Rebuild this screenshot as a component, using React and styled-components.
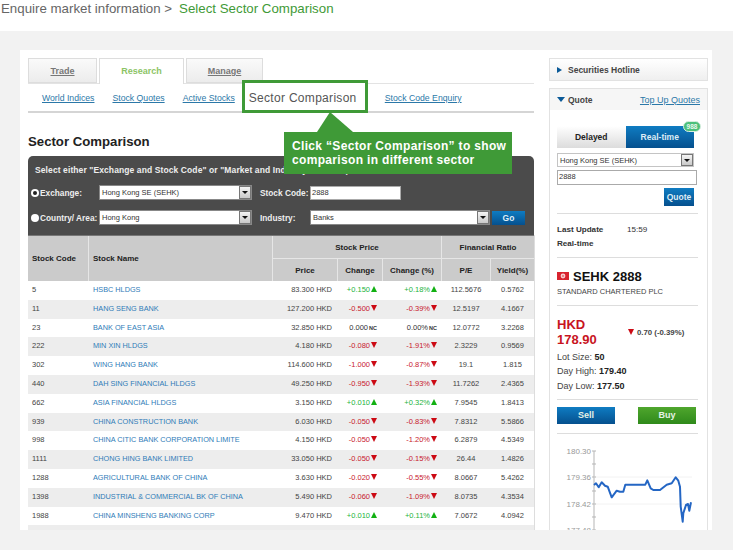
import React from "react";
import styled, { createGlobalStyle } from "styled-components";

const GlobalStyle = createGlobalStyle`
  html, body { margin: 0; padding: 0; background: #fff; }
  body { font-family: "Liberation Sans", Arial, sans-serif; }
  * { box-sizing: border-box; }
`;

const GREEN = "#3f9a37";
const LINK = "#2b78a8";
const BLUE_GRAD = "linear-gradient(#0f7cc2, #05508e)";
const TABLE_COLS = "60px 183px 64px 44px 58px 48px 1fr";

const rows = [
  ["5", "HSBC HLDGS", "83.300", "+0.150", "+0.18%", "112.5676", "0.5762"],
  ["11", "HANG SENG BANK", "127.200", "-0.500", "-0.39%", "12.5197", "4.1667"],
  ["23", "BANK OF EAST ASIA", "32.850", "0.000", "0.00%", "12.0772", "3.2268"],
  ["222", "MIN XIN HLDGS", "4.180", "-0.080", "-1.91%", "2.3229", "0.9569"],
  ["302", "WING HANG BANK", "114.600", "-1.000", "-0.87%", "19.1", "1.815"],
  ["440", "DAH SING FINANCIAL HLDGS", "49.250", "-0.950", "-1.93%", "11.7262", "2.4365"],
  ["662", "ASIA FINANCIAL HLDGS", "3.150", "+0.010", "+0.32%", "7.9545", "1.8413"],
  ["939", "CHINA CONSTRUCTION BANK", "6.030", "-0.050", "-0.83%", "7.8312", "5.5866"],
  ["998", "CHINA CITIC BANK CORPORATION LIMITE", "4.150", "-0.050", "-1.20%", "6.2879", "4.5349"],
  ["1111", "CHONG HING BANK LIMITED", "33.050", "-0.050", "-0.15%", "26.44", "1.4826"],
  ["1288", "AGRICULTURAL BANK OF CHINA", "3.630", "-0.020", "-0.55%", "8.0667", "5.4262"],
  ["1398", "INDUSTRIAL & COMMERCIAL BK OF CHINA", "5.490", "-0.060", "-1.09%", "8.0735", "4.3534"],
  ["1988", "CHINA MINSHENG BANKING CORP", "9.470", "+0.010", "+0.11%", "7.0672", "4.0942"],
];

const chartLine = [
  [162, 285], [168, 280], [176, 292], [185, 277], [195, 287], [203, 290], [215, 322], [230, 302],
  [240, 305], [250, 305], [256, 284], [316, 284], [322, 271], [332, 295], [340, 300], [360, 300],
  [380, 284], [395, 280], [407, 262], [415, 272], [420, 290], [422, 350], [428, 395], [430, 370],
  [438, 345], [444, 342], [448, 362], [453, 337],
];

const Page = styled.div`
  width: 733px;
  height: 550px;
  overflow: hidden;
  background: #f2f2f2;
`;

const Title = styled.div`
  height: 31px;
  background: #fff;
  padding: 0 0 0 1px;
  font-size: 13.3px;
  line-height: 17px;
  color: #666;
  display: flex;
  gap: 7px;
`;

const TitleGreen = styled.span`
  color: ${GREEN};
`;

const Sheet = styled.div`
  margin: 19px 21px 0 20px;
  height: 480px;
  background: #fff;
  padding: 8px 4px 0 8px;
  display: flex;
  gap: 15px;
  overflow: hidden;
`;

const Main = styled.div`
  position: relative;
  width: 506px;
  flex: none;
`;

const Tabs = styled.div`
  display: flex;
  gap: 2px;
  height: 25px;
`;

const Tab = styled.div`
  width: ${(p) => p.$w}px;
  height: ${(p) => (p.$active ? 26 : 25)}px;
  border: 1px solid #ddd;
  border-bottom: ${(p) => (p.$active ? "none" : "1px solid #ddd")};
  background: ${(p) => (p.$active ? "#fff" : "linear-gradient(#fafafa, #ececec)")};
  color: ${(p) => (p.$active ? "#8cc465" : "#777")};
  text-decoration: ${(p) => (p.$active ? "none" : "underline")};
  font-size: 9px;
  font-weight: bold;
  text-align: center;
  line-height: 25px;
  position: relative;
`;

const SubNav = styled.nav`
  height: 30px;
  border-top: 1px solid #e3e3e3;
  border-bottom: 2px solid #d5d5d5;
  display: flex;
  align-items: center;
  padding: 1px 0 0 14px;
  gap: 18px;
`;

const NavLink = styled.a`
  font-size: 8.7px;
  color: ${LINK};
  text-decoration: underline;
  white-space: nowrap;
`;

const SectorBox = styled.div`
  align-self: flex-start;
  flex: none;
  width: 126px;
  height: 33px;
  margin: -5px -1px 0 -11px;
  border: 3px solid ${GREEN};
  background: #fff;
  color: #555;
  font-size: 12px;
  letter-spacing: 0.3px;
  line-height: 27px;
  padding: 2px 0 0 4px;
  white-space: nowrap;
  position: relative;
`;

const Callout = styled.div`
  position: absolute;
  left: 256px;
  top: 74px;
  width: 228px;
  height: 42px;
  background: ${GREEN};
  color: #fff;
  font-size: 12px;
  letter-spacing: 0.33px;
  font-weight: bold;
  line-height: 14px;
  padding: 7px 0 0 8px;
  z-index: 3;
  white-space: nowrap;

  &::before {
    content: "";
    position: absolute;
    left: 33px;
    top: -20px;
    width: 36px;
    height: 20px;
    background: ${GREEN};
    clip-path: polygon(13px 0, 0 100%, 100% 100%);
  }
`;

const Heading = styled.h2`
  margin: 19px 0 0;
  height: 24px;
  font-size: 13.2px;
  line-height: 19px;
  color: #222;
`;

const Filter = styled.div`
  height: 79px;
  background: #4b4b4b;
  border-radius: 5px 5px 0 0;
  padding: 8px 0 0 3px;
  color: #eee;
  font-size: 8.5px;
  font-weight: bold;
`;

const FilterHint = styled.div`
  line-height: 12px;
  padding-left: 4px;
  letter-spacing: 0.1px;
  white-space: nowrap;
`;

const FilterRow = styled.div`
  display: flex;
  align-items: center;
  height: 15px;
  margin-top: ${(p) => p.$top}px;
`;

const Radio = styled.span`
  width: 8px;
  height: 8px;
  border-radius: 50%;
  background: #fff;
  flex: none;
  margin-right: 1px;
  position: relative;

  &::after {
    content: "";
    display: ${(p) => (p.$on ? "block" : "none")};
    position: absolute;
    left: 2px;
    top: 2px;
    width: 4px;
    height: 4px;
    border-radius: 50%;
    background: #222;
  }
`;

const FilterLabel = styled.span`
  width: ${(p) => p.$w}px;
  padding-left: ${(p) => p.$pad || 0}px;
  flex: none;
  font-size: 8.3px;
  white-space: nowrap;
`;

const SelectBox = styled.div`
  width: ${(p) => p.$w}px;
  height: ${(p) => p.$h || 15}px;
  flex: none;
  background: #fff;
  border: 1px solid ${(p) => (p.$light ? "#c4c4c4" : "#888")};
  color: #333;
  font-size: 7.5px;
  font-weight: normal;
  line-height: 13px;
  padding-left: 2px;
  display: flex;
  justify-content: space-between;
  white-space: nowrap;
`;

const SelectArrow = styled.span`
  width: 12px;
  flex: none;
  background: linear-gradient(#f4f4f4, #c9c9c9);
  border: 1px solid #777;
  display: flex;
  align-items: center;
  justify-content: center;

  &::after {
    content: "";
    border-left: 3px solid transparent;
    border-right: 3px solid transparent;
    border-top: 3px solid #111;
  }
`;

const TextBox = styled.div`
  width: ${(p) => p.$w}px;
  height: ${(p) => p.$h}px;
  flex: none;
  background: #fff;
  border: 1px solid #aaa;
  color: #333;
  font-size: 7.5px;
  font-weight: normal;
  line-height: 12px;
  padding-left: 1px;
`;

const GoButton = styled.span`
  width: 33px;
  height: 14px;
  margin-left: 2px;
  background: ${BLUE_GRAD};
  color: #dfeef8;
  font-size: 8.5px;
  text-align: center;
  line-height: 14px;
`;

const TableWrap = styled.div`
  border-left: 1px solid #ddd;
  border-right: 1px solid #ddd;
  margin-right: -1px;
`;

const Head = styled.div`
  display: grid;
  grid-template-columns: ${TABLE_COLS};
  grid-template-rows: 22px 22px;
  gap: 1px;
  background: #e6e6e6;
  border-top: 1px solid #777;
  margin-left: -1px;
`;

const HeadCell = styled.div`
  background: #cbcbcb;
  color: #222;
  font-size: 8px;
  font-weight: bold;
  display: flex;
  align-items: center;
  justify-content: ${(p) => (p.$left ? "flex-start" : "center")};
  padding-left: ${(p) => (p.$left ? 4 : 0)}px;
  grid-column: ${(p) => p.$col || "auto"};
  grid-row: ${(p) => p.$row || "auto"};
  white-space: nowrap;
`;

const Row = styled.div`
  display: grid;
  grid-template-columns: ${TABLE_COLS};
  column-gap: 1px;
  height: 18.8px;
  margin-left: -1px;
  background: ${(p) => (p.$alt ? "#ededed" : "#fff")};
  color: #444;
  font-size: 7.5px;
  line-height: 18.8px;
  white-space: nowrap;
`;

const Cell = styled.div`
  text-align: ${(p) => p.$align || "left"};
  padding: ${(p) => p.$pad || "0"};
  overflow: hidden;
`;

const NameLink = styled.a`
  color: #2f7cb8;
  font-size: 7.3px;
`;

const Move = styled(Cell)`
  color: ${(p) => (p.$dir > 0 ? "#22b33a" : p.$dir < 0 ? "#c8202c" : "#333")};
  text-align: right;
`;

const Arrow = styled.span`
  display: inline-block;
  width: 0;
  height: 0;
  margin-left: 1px;
  border-left: 3px solid transparent;
  border-right: 3px solid transparent;
  border-bottom: ${(p) => (p.$dir > 0 ? "6px solid #12b012" : "none")};
  border-top: ${(p) => (p.$dir < 0 ? "6px solid #cc0a14" : "none")};
`;

const Flat = styled.span`
  font-size: 5.5px;
  font-weight: bold;
  margin-left: 1px;
`;

const Side = styled.aside`
  width: 159px;
  flex: none;
`;

const HotlineBox = styled.div`
  height: 23px;
  border: 1px solid #e2e2e2;
  background: linear-gradient(#fff, #efefef);
  display: flex;
  align-items: center;
  gap: 6px;
  padding-left: 7px;
  font-size: 8.5px;
  font-weight: bold;
  color: #444;
`;

const Caret = styled.span`
  width: 0;
  height: 0;
  flex: none;
  ${(p) =>
    p.$down
      ? `border-left: 4px solid transparent; border-right: 4px solid transparent; border-top: 5px solid #0b5a98;`
      : `border-top: 3.5px solid transparent; border-bottom: 3.5px solid transparent; border-left: 5px solid #0b5a98;`}
`;

const QuoteBox = styled.div`
  margin-top: 7px;
  height: 470px;
  border: 1px solid #e2e2e2;
  border-bottom: none;
`;

const QuoteHead = styled.div`
  height: 21px;
  background: #f6f6f6;
  display: flex;
  align-items: center;
  padding: 0 7px;
  gap: 3px;
  font-size: 8.5px;
  font-weight: bold;
  color: #444;
`;

const TopUp = styled.a`
  margin-left: auto;
  font-size: 9px;
  font-weight: normal;
  color: ${LINK};
  text-decoration: underline;
`;

const QuoteBody = styled.div`
  padding: 16px 0 0 7px;
`;

const Toggle = styled.div`
  position: relative;
  width: 137px;
  height: 22px;
  display: flex;
`;

const ToggleBtn = styled.div`
  flex: 1;
  background: ${(p) => (p.$on ? BLUE_GRAD : "linear-gradient(#fff, #dcdcdc)")};
  color: ${(p) => (p.$on ? "#dcecf6" : "#222")};
  font-size: 8.5px;
  font-weight: bold;
  text-align: center;
  line-height: 22px;
`;

const Badge = styled.span`
  position: absolute;
  right: -7px;
  top: -5px;
  width: 18px;
  height: 11px;
  border-radius: 6px;
  background: #4cc07a;
  border: 1px solid #d8efe0;
  color: #e8f8ee;
  font-size: 6.5px;
  font-weight: bold;
  text-align: center;
  line-height: 9px;
`;

const QuoteField = styled.div`
  margin-top: ${(p) => p.$top}px;
`;

const QuoteBtnRow = styled.div`
  margin-top: 3px;
  width: 137px;
  display: flex;
  justify-content: flex-end;
`;

const QuoteBtn = styled.span`
  width: 30px;
  height: 18px;
  background: ${BLUE_GRAD};
  color: #dcecf6;
  font-size: 8.5px;
  font-weight: bold;
  text-align: center;
  line-height: 18px;
`;

const Rule = styled.div`
  width: 141px;
  height: 1px;
  background: #ddd;
  margin-top: ${(p) => p.$top}px;
`;

const InfoRow = styled.div`
  display: flex;
  font-size: 8.1px;
  line-height: 14px;
  color: #333;
  margin-top: ${(p) => p.$top || 0}px;
`;

const InfoKey = styled.span`
  width: 70px;
  font-weight: bold;
`;

const SymbolRow = styled.div`
  display: flex;
  align-items: center;
  gap: 4px;
  margin-top: 9px;
  height: 18px;
  font-size: 13px;
  font-weight: bold;
  color: #111;
`;

const CompanyName = styled.div`
  font-size: 7.5px;
  line-height: 12px;
  margin-top: 1px;
  color: #444;
`;

const PriceRow = styled.div`
  display: flex;
  align-items: center;
  margin: 11px 0 3px;
`;

const Price = styled.div`
  width: 70px;
  font-size: 13px;
  font-weight: bold;
  line-height: 15px;
  color: #c8141e;
`;

const PriceMove = styled.div`
  display: flex;
  align-items: center;
  gap: 3px;
  font-size: 7.8px;
  font-weight: bold;
  color: #444;
  white-space: nowrap;
`;

const Stat = styled.div`
  font-size: 9px;
  line-height: 14.3px;
  color: #444;

  b {
    color: #222;
  }
`;

const TradeRow = styled.div`
  display: flex;
  justify-content: space-between;
  width: 139px;
  margin-top: 7px;
`;

const TradeBtn = styled.span`
  width: 58px;
  height: 17px;
  background: ${(p) => (p.$buy ? "linear-gradient(#4fa62d, #2f8a1b)" : BLUE_GRAD)};
  color: #e6f2e6;
  font-size: 9px;
  font-weight: bold;
  text-align: center;
  line-height: 17px;
`;

const Chart = styled.svg`
  display: block;
  margin: 7px 0 0 -7px;
`;

function HkFlag() {
  return (
    <svg width="12" height="8" viewBox="0 0 12 8">
      <rect width="12" height="8" fill="#d8232f" />
      <circle cx="6" cy="4" r="2.4" fill="#f6cfd2" />
      <circle cx="6" cy="4" r="0.8" fill="#d8232f" />
    </svg>
  );
}

function PriceChart() {
  // chart box starts at x=550, y=441 on the page
  const toX = (x) => (x / 3 + 540 - 550).toFixed(1);
  const toY = (y) => (y / 3 + 390 - 441).toFixed(1);
  const points = chartLine.map(([x, y]) => `${toX(x)},${toY(y)}`).join(" ");
  const labels = [
    ["180.30", 10],
    ["179.36", 36],
    ["178.42", 63],
    ["177.48", 89],
  ];
  const ticks = [10, 23, 36, 50, 63, 76, 89];

  return (
    <Chart width="157" height="92" viewBox="0 0 157 92">
      <line x1="44" y1="10" x2="44" y2="92" stroke="#b5b5b5" />
      <line x1="44" y1="36" x2="142" y2="36" stroke="#f2f2f2" />
      <line x1="44" y1="63" x2="142" y2="63" stroke="#f2f2f2" />
      {ticks.map((y) => (
        <line key={y} x1="42" y1={y} x2="46" y2={y} stroke="#b5b5b5" />
      ))}
      {labels.map(([text, y]) => (
        <text key={text} x="41" y={y + 3} textAnchor="end" fontSize="8" fill="#999" fontFamily="Liberation Sans, sans-serif">
          {text}
        </text>
      ))}
      <polyline points={points} fill="none" stroke="#2466c4" strokeWidth="2" strokeLinejoin="round" />
    </Chart>
  );
}

function MoveCell({ value, pad }) {
  const dir = value.startsWith("+") ? 1 : value.startsWith("-") ? -1 : 0;
  return (
    <Move $dir={dir} $pad={pad}>
      {value}
      {dir === 0 ? <Flat>NC</Flat> : <Arrow $dir={dir} />}
    </Move>
  );
}

function Select({ w, h, light, children }) {
  return (
    <SelectBox $w={w} $h={h} $light={light}>
      {children}
      <SelectArrow />
    </SelectBox>
  );
}

export default function App() {
  return (
    <Page>
      <GlobalStyle />
      <Title>
        <span>Enquire market information &gt;</span>
        <TitleGreen>Select Sector Comparison</TitleGreen>
      </Title>
      <Sheet>
        <Main>
          <Tabs>
            <Tab $w={69}>Trade</Tab>
            <Tab $w={85} $active>
              Research
            </Tab>
            <Tab $w={77}>Manage</Tab>
          </Tabs>
          <SubNav>
            <NavLink>World Indices</NavLink>
            <NavLink>Stock Quotes</NavLink>
            <NavLink>Active Stocks</NavLink>
            <SectorBox>Sector Comparison</SectorBox>
            <NavLink>Stock Code Enquiry</NavLink>
          </SubNav>
          <Callout>
            Click “Sector Comparison” to show
            <br />
            comparison in different sector
          </Callout>
          <Heading>Sector Comparison</Heading>
          <Filter>
            <FilterHint>Select either "Exchange and Stock Code" or "Market and Industry" for comparison</FilterHint>
            <FilterRow $top={9}>
              <Radio $on />
              <FilterLabel $w={59}>Exchange:</FilterLabel>
              <Select w={153}>Hong Kong SE (SEHK)</Select>
              <FilterLabel $w={58} $pad={8}>
                Stock Code:
              </FilterLabel>
              <TextBox $w={91} $h={14}>
                2888
              </TextBox>
            </FilterRow>
            <FilterRow $top={10}>
              <Radio />
              <FilterLabel $w={59}>Country/ Area:</FilterLabel>
              <Select w={153}>Hong Kong</Select>
              <FilterLabel $w={58} $pad={8}>
                Industry:
              </FilterLabel>
              <Select w={180}>Banks</Select>
              <GoButton>Go</GoButton>
            </FilterRow>
          </Filter>
          <TableWrap>
            <Head>
              <HeadCell $left $row="1 / 3">
                Stock Code
              </HeadCell>
              <HeadCell $left $row="1 / 3">
                Stock Name
              </HeadCell>
              <HeadCell $col="3 / 6">Stock Price</HeadCell>
              <HeadCell $col="6 / 8">Financial Ratio</HeadCell>
              <HeadCell>Price</HeadCell>
              <HeadCell>Change</HeadCell>
              <HeadCell>Change (%)</HeadCell>
              <HeadCell>P/E</HeadCell>
              <HeadCell>Yield(%)</HeadCell>
            </Head>
            {rows.map((r, i) => (
              <Row key={r[0]} $alt={i % 2 === 1}>
                <Cell $pad="0 0 0 4px">{r[0]}</Cell>
                <Cell $pad="0 0 0 4px">
                  <NameLink>{r[1]}</NameLink>
                </Cell>
                <Cell $align="right" $pad="0 5px 0 0">
                  {r[2]} HKD
                </Cell>
                <MoveCell value={r[3]} pad="0 5px 0 0" />
                <MoveCell value={r[4]} pad="0 4px 0 0" />
                <Cell $align="center">{r[5]}</Cell>
                <Cell $align="center">{r[6]}</Cell>
              </Row>
            ))}
            <Row $alt />
          </TableWrap>
        </Main>
        <Side>
          <HotlineBox>
            <Caret />
            Securities Hotline
          </HotlineBox>
          <QuoteBox>
            <QuoteHead>
              <Caret $down />
              Quote
              <TopUp>Top Up Quotes</TopUp>
            </QuoteHead>
            <QuoteBody>
              <Toggle>
                <ToggleBtn>Delayed</ToggleBtn>
                <ToggleBtn $on>Real-time</ToggleBtn>
                <Badge>988</Badge>
              </Toggle>
              <QuoteField $top={5}>
                <Select w={137} h={14} light>
                  Hong Kong SE (SEHK)
                </Select>
              </QuoteField>
              <QuoteField $top={3}>
                <TextBox $w={140} $h={15}>
                  2888
                </TextBox>
              </QuoteField>
              <QuoteBtnRow>
                <QuoteBtn>Quote</QuoteBtn>
              </QuoteBtnRow>
              <Rule $top={7} />
              <InfoRow $top={9}>
                <InfoKey>Last Update</InfoKey>
                <span>15:59</span>
              </InfoRow>
              <InfoRow>
                <InfoKey>Real-time</InfoKey>
              </InfoRow>
              <Rule $top={6} />
              <SymbolRow>
                <HkFlag />
                SEHK 2888
              </SymbolRow>
              <CompanyName>STANDARD CHARTERED PLC</CompanyName>
              <Rule $top={7} />
              <PriceRow>
                <Price>
                  HKD
                  <br />
                  178.90
                </Price>
                <PriceMove>
                  <Arrow $dir={-1} />
                  0.70 (-0.39%)
                </PriceMove>
              </PriceRow>
              <Stat>
                Lot Size: <b>50</b>
              </Stat>
              <Stat>
                Day High: <b>179.40</b>
              </Stat>
              <Stat>
                Day Low: <b>177.50</b>
              </Stat>
              <Rule $top={6} />
              <TradeRow>
                <TradeBtn>Sell</TradeBtn>
                <TradeBtn $buy>Buy</TradeBtn>
              </TradeRow>
              <Rule $top={9} />
              <PriceChart />
            </QuoteBody>
          </QuoteBox>
        </Side>
      </Sheet>
    </Page>
  );
}
